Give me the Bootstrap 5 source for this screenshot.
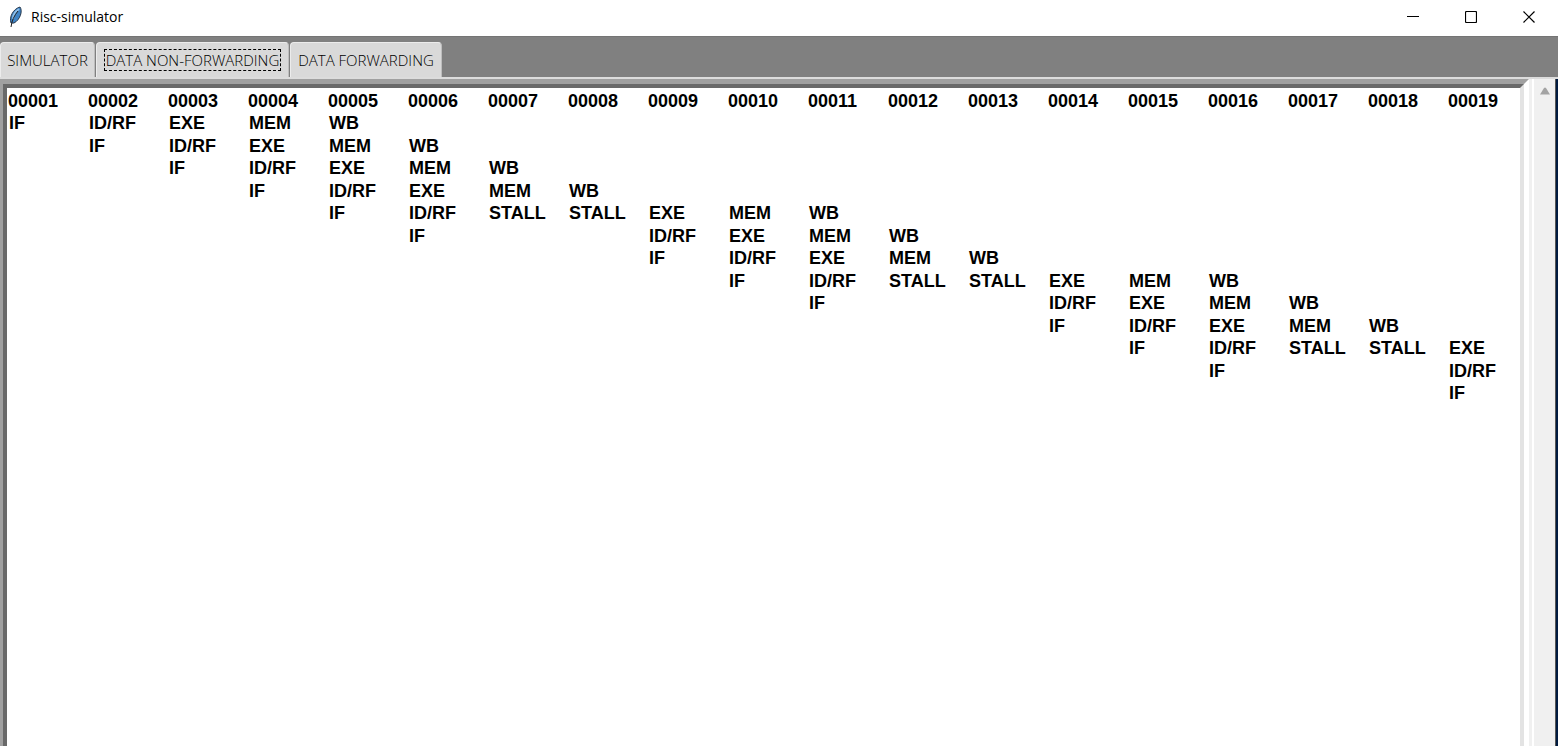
<!DOCTYPE html>
<html lang="en">
<head>
<meta charset="utf-8">
<meta name="viewport" content="width=device-width, initial-scale=1">
<title>Risc-simulator</title>
<link href="https://cdn.jsdelivr.net/npm/bootstrap@5.3.0/dist/css/bootstrap.min.css" rel="stylesheet">
<style>
  body { font-family: "Open Sans", sans-serif; font-size: 14px; color: #000; background: #fff; }
  .titlebar { height: 36px; padding-bottom: 2px; }
  .title-text { font-size: 14px; line-height: 20px; }
  .win-btn { width: 58px; height: 34px; }
  .tabstrip { background: #808080; border-top: 1px solid #747474; height: 43px; border-bottom: 2px solid #dcdcdc; }
  .tabstrip .nav-link { height: 35px; margin: 0 1px 0 0; padding: 0; color: #000; background: #d9d9d9; border: 1px solid #ececec; border-right-color: #bdbdbd; border-bottom: 0; border-radius: 4px 4px 0 0; font-size: 15px; font-weight: 300; line-height: 20px; white-space: nowrap; display: flex; align-items: center; justify-content: center; }
  .tab-a { width: 95px; }
  .tab-b { width: 193px; }
  .tab-c { width: 152px; }
  .focused-label { outline: 1px dashed #000; padding: 0 1px; }
  .sunken { border: 3px solid #a0a0a0; border-top-width: 5px; border-right: 5px solid #fff; border-bottom: 0; }
  .sunken-inner { border: 4px solid #696969; border-right-color: #e3e3e3; border-bottom: 0; background: #fff; padding: 2px 0 0 1px; overflow: hidden; }
  .cycles { table-layout: fixed; width: 100%; font: bold 18px/22px "Liberation Sans", Arial, sans-serif; }
  .cycles th, .cycles td { width: 80px; height: 22px; padding: 0 0 0 1px; text-align: left; white-space: nowrap; }
  .cycles th { padding-left: 0; }
  .cycles tbody tr:nth-child(even) td { height: 23px; }
  .gutter { width: 3px; background: #f0f0f0; margin-right: 2px; }
  .scroller { width: 21px; background: #f0f0f0; }
  .scroll-btn { height: 24px; }
  .edge { width: 3px; background: #001a40; border-left: 1px solid #555; }
</style>
</head>
<body class="vh-100 overflow-hidden d-flex flex-column">
<header class="titlebar d-flex align-items-center flex-shrink-0">
  <svg class="ms-2 me-2" width="15" height="22" viewBox="0 0 15 22" aria-hidden="true">
    <path d="M3 17C1 11 5 3 12 1C15 5 12 14 6 17Z" fill="#3e84c6" stroke="#26384c"/>
    <path d="M5 13C5 9 8 5 11 3" fill="none" stroke="#8fc0ea" stroke-width="2"/>
    <path d="M3 21C4 14 6 10 10 5" fill="none" stroke="#222"/>
  </svg>
  <span class="title-text">Risc-simulator</span>
  <div class="ms-auto d-flex">
    <button class="win-btn btn p-0 border-0 rounded-0 d-flex align-items-center justify-content-center" type="button" aria-label="Minimize"><svg width="12" height="12" shape-rendering="crispEdges"><path d="M0 5.5H12" stroke="#000"/></svg></button>
    <button class="win-btn btn p-0 border-0 rounded-0 d-flex align-items-center justify-content-center" type="button" aria-label="Maximize"><svg width="12" height="12"><rect x=".5" y=".5" width="11" height="11" rx="1" fill="none" stroke="#000" stroke-width="1.2"/></svg></button>
    <button class="win-btn btn p-0 border-0 rounded-0 d-flex align-items-center justify-content-center" type="button" aria-label="Close"><svg width="12" height="12"><path d="M.5.5 11.5 11.5M11.5.5.5 11.5" stroke="#000" stroke-width="1.2"/></svg></button>
  </div>
</header>
<nav class="tabstrip nav flex-nowrap align-items-end flex-shrink-0" role="tablist">
  <button class="nav-link tab-a" type="button" role="tab">SIMULATOR</button>
  <button class="nav-link tab-b" type="button" role="tab" aria-selected="true"><span class="focused-label">DATA NON-FORWARDING</span></button>
  <button class="nav-link tab-c" type="button" role="tab">DATA FORWARDING</button>
</nav>
<main class="d-flex flex-grow-1 overflow-hidden">
  <div class="sunken flex-grow-1 d-flex overflow-hidden">
    <div class="sunken-inner flex-grow-1">
      <table class="cycles">
        <thead><tr id="cycle-head"></tr></thead>
        <tbody id="cycle-body"></tbody>
      </table>
    </div>
  </div>
  <div class="gutter flex-shrink-0"></div>
  <div class="scroller flex-shrink-0">
    <button class="scroll-btn btn w-100 p-0 border-0 rounded-0 d-flex align-items-center justify-content-center" type="button" aria-label="Scroll up"><svg width="12" height="8"><path d="M1 7.5 5 1Q6 0 7 1L11 7.5Z" fill="#a3a3a3"/></svg></button>
  </div>
  <div class="edge flex-shrink-0"></div>
</main>
<script src="https://cdn.jsdelivr.net/npm/bootstrap@5.3.0/dist/js/bootstrap.bundle.min.js"></script>
<script>
  // Each instruction: the cycle it is fetched in, then its stage per cycle ("-" leaves a cycle empty).
  const instructions = [
    [1, "IF ID/RF EXE MEM WB"],
    [2, "IF ID/RF EXE MEM WB"],
    [3, "IF ID/RF EXE MEM WB"],
    [4, "IF ID/RF EXE MEM WB"],
    [5, "IF ID/RF STALL STALL EXE MEM WB"],
    [6, "IF - - ID/RF EXE MEM WB"],
    [9, "IF ID/RF EXE MEM WB"],
    [10, "IF ID/RF STALL STALL EXE MEM WB"],
    [11, "IF - - ID/RF EXE MEM WB"],
    [14, "IF ID/RF EXE MEM WB"],
    [15, "IF ID/RF STALL STALL EXE"],
    [16, "IF - - ID/RF"],
    [19, "IF"]
  ];
  const cycleCount = 19;
  const head = document.getElementById("cycle-head");
  for (let c = 1; c <= cycleCount; c++) {
    const th = document.createElement("th");
    th.scope = "col";
    th.textContent = String(c).padStart(5, "0");
    if (c === cycleCount) th.style.width = "auto";
    head.append(th);
  }
  const body = document.getElementById("cycle-body");
  for (const [start, text] of instructions) {
    const stages = text.split(" ");
    const row = body.insertRow();
    for (let c = 1; c <= cycleCount; c++) {
      const stage = stages[c - start];
      row.insertCell().textContent = stage && stage !== "-" ? stage : "";
    }
  }
</script>
</body>
</html>
